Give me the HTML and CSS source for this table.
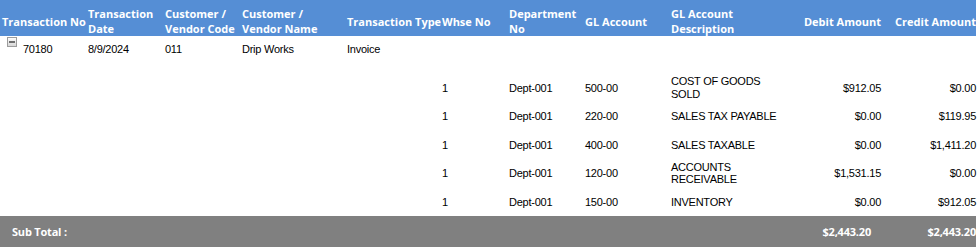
FILE: index.html
```html
<!DOCTYPE html>
<html>
<head>
<meta charset="utf-8">
<link rel="stylesheet" href="styles.css">
</head>
<body>
<table class="grid">
  <colgroup>
    <col class="w86"><col class="w77"><col class="w77"><col class="w105"><col class="w95"><col class="w67"><col class="w76"><col class="w86"><col class="w116"><col class="w98"><col class="w93">
  </colgroup>
  <thead>
    <tr class="head">
      <th class="nw">Transaction No</th>
      <th>Transaction<br>Date</th>
      <th>Customer /<br>Vendor Code</th>
      <th>Customer /<br>Vendor Name</th>
      <th class="nw">Transaction Type</th>
      <th class="nw">Whse No</th>
      <th>Department<br>No</th>
      <th class="nw">GL Account</th>
      <th>GL Account<br>Description</th>
      <th class="nw num">Debit Amount</th>
      <th class="nw num last">Credit Amount</th>
    </tr>
  </thead>
  <tbody>
    <tr class="master">
      <td class="first">
        <div class="toggle">
          <svg class="minus" width="10" height="10" viewBox="0 0 10 10">
            <defs>
              <linearGradient id="g" x1="0" y1="0" x2="0" y2="1">
                <stop offset="0" stop-color="#ffffff"/>
                <stop offset="1" stop-color="#d4d4d4"/>
              </linearGradient>
            </defs>
            <rect x="0.5" y="0.5" width="9" height="9" fill="url(#g)" stroke="#9c9c9c"/>
            <rect x="2" y="4" width="6" height="2" fill="#6e6e6e"/>
          </svg>
          <span class="tno">70180</span>
        </div>
      </td>
      <td>8/9/2024</td>
      <td>011</td>
      <td>Drip Works</td>
      <td>Invoice</td>
      <td></td><td></td><td></td><td></td><td></td><td class="last"></td>
    </tr>
    <tr class="detail">
      <td></td><td></td><td></td><td></td><td></td>
      <td>1</td><td>Dept-001</td><td>500-00</td><td>COST OF GOODS SOLD</td>
      <td class="num">$912.05</td><td class="num last">$0.00</td>
    </tr>
    <tr class="detail">
      <td></td><td></td><td></td><td></td><td></td>
      <td>1</td><td>Dept-001</td><td>220-00</td><td>SALES TAX PAYABLE</td>
      <td class="num">$0.00</td><td class="num last">$119.95</td>
    </tr>
    <tr class="detail">
      <td></td><td></td><td></td><td></td><td></td>
      <td>1</td><td>Dept-001</td><td>400-00</td><td>SALES TAXABLE</td>
      <td class="num">$0.00</td><td class="num last">$1,411.20</td>
    </tr>
    <tr class="detail">
      <td></td><td></td><td></td><td></td><td></td>
      <td>1</td><td>Dept-001</td><td>120-00</td><td>ACCOUNTS RECEIVABLE</td>
      <td class="num">$1,531.15</td><td class="num last">$0.00</td>
    </tr>
    <tr class="detail">
      <td></td><td></td><td></td><td></td><td></td>
      <td>1</td><td>Dept-001</td><td>150-00</td><td>INVENTORY</td>
      <td class="num">$0.00</td><td class="num last">$912.05</td>
    </tr>
  </tbody>
  <tfoot>
    <tr class="total">
      <td class="label" colspan="9">Sub Total :</td>
      <td class="num sdebit">$2,443.20</td>
      <td class="num last">$2,443.20</td>
    </tr>
  </tfoot>
</table>
</body>
</html>
```

FILE: styles.css
```css
html, body {
  margin: 0;
  padding: 0;
  background: #ffffff;
}

.grid {
  border-collapse: collapse;
  table-layout: fixed;
  width: 976px;
  font-family: "Liberation Sans", Arial, sans-serif;
  font-size: 11px;
  letter-spacing: -0.25px;
  color: #000000;
}

.w86 { width: 86px; }
.w77 { width: 77px; }
.w105 { width: 105px; }
.w95 { width: 95px; }
.w67 { width: 67px; }
.w76 { width: 76px; }
.w98 { width: 98px; }
.w93 { width: 93px; }
.w116 { width: 116px; }

.grid th,
.grid td {
  padding: 0 2px;
  text-align: left;
  overflow: visible;
}

.grid .num { text-align: right; }
.grid .last { padding-right: 0; }

.head { height: 36px; }

.head th {
  background: #558ed5;
  color: #ffffff;
  font-family: "Open Sans", "Noto Sans", sans-serif;
  font-weight: 700;
  font-size: 11px;
  letter-spacing: 0;
  line-height: 15px;
  padding-top: 6px;
  padding-bottom: 0;
  vertical-align: middle;
}

.head th.num { text-align: right; }
.head th.last { padding-right: 0; }
.nw { white-space: nowrap; }

.master { height: 37.5px; }
.master td {
  vertical-align: top;
  padding-top: 5px;
  line-height: 16px;
}

.master td.first { padding-top: 1px; }

.toggle {
  display: flex;
  align-items: flex-start;
  gap: 6px;
  padding-left: 5px;
}

.minus {
  display: block;
  flex: none;
}

.tno {
  margin-top: 4px;
  line-height: 16px;
}

.detail { height: 28.5px; }
.detail td {
  vertical-align: middle;
  line-height: 12.5px;
}

.total { height: 31px; }
.total td {
  background: #808080;
  color: #ffffff;
  font-family: "Open Sans", "Noto Sans", sans-serif;
  font-weight: 700;
  font-size: 11px;
  letter-spacing: -0.2px;
  vertical-align: middle;
}

.total td.label { padding-left: 12px; }
.total td.sdebit { padding-right: 12px; }
```
